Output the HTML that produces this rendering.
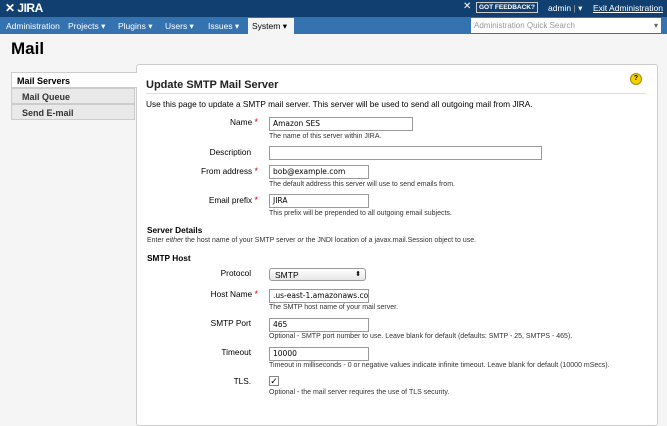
<!DOCTYPE html>
<html><head><style>
body{margin:0;width:667px;height:406px;overflow:hidden;background:#f5f5f5;font-family:"Liberation Sans",Arial,sans-serif;position:relative;color:#000}
.a{position:absolute;white-space:nowrap}
.top{position:absolute;left:0;top:0;width:667px;height:17px;background:#114070}
.nav{position:absolute;left:0;top:17px;width:667px;height:17px;background:#3572b0}
.nav span{position:absolute;top:4px;font-size:8.5px;color:#fff}
.panel{position:absolute;left:136px;top:64px;width:520px;height:360px;background:#fff;border:1px solid #ccc;border-radius:3px}
.tab{position:absolute;left:11px;width:124px;height:16px;font-size:9px;font-weight:bold;border:1px solid #ccc;box-sizing:border-box;padding:3px 0 0 10px;color:#333;background:#e9e9e9}
.lbl{position:absolute;font-size:8.3px;text-align:right;right:409px;white-space:nowrap}
.req{color:#c00;font-size:9px}
.inp{position:absolute;left:269px;height:12px;border:1px solid #999;background:#fff;font-size:7.5px;padding:0 3px;box-sizing:content-box;font-family:"DejaVu Sans",sans-serif;line-height:12px;white-space:nowrap;overflow:hidden}
.desc{position:absolute;left:269px;font-size:7px;color:#333;white-space:nowrap}
.b{font-weight:bold}
</style></head><body>
<div class="top"></div>
<div class="a" style="left:5px;top:1px;color:#fff;font-weight:bold;font-size:12px;letter-spacing:-0.5px">✕ JIRA</div>
<div class="a" style="left:463px;top:1px;color:#fff;font-size:10px">✕</div>
<div class="a" style="left:476px;top:2px;color:#fff;font-size:6.5px;border:1px solid #ccc;padding:1px 2px;font-weight:bold">GOT FEEDBACK?</div>
<div class="a" style="left:548px;top:3px;color:#fff;font-size:8.5px">admin <span style="color:#aaa">|</span> ▾</div>
<div class="a" style="left:593px;top:3px;color:#fff;font-size:8.5px;text-decoration:underline">Exit Administration</div>
<div class="nav"></div>
<div class="nav" style="background:none">
<span style="left:6px">Administration</span>
<span style="left:68px">Projects ▾</span>
<span style="left:118px">Plugins ▾</span>
<span style="left:165px">Users ▾</span>
<span style="left:208px">Issues ▾</span>
</div>
<div class="a" style="left:248px;top:18px;width:46px;height:16px;background:#f5f5f5;font-size:8.5px;padding:3px 0 0 4px;box-sizing:border-box">System ▾</div>
<div class="a" style="left:471px;top:18px;width:190px;height:15px;background:#fff;font-size:8px;color:#999;padding:3px 3px;box-sizing:border-box">Administration Quick Search<span style="position:absolute;right:3px;color:#666">▾</span></div>
<div class="a" style="left:11px;top:39px;font-size:17px;font-weight:bold">Mail</div>
<div class="panel"></div>
<div class="tab" style="top:72px;background:#fff;border-right:none;width:126px;padding-left:5px;color:#000">Mail Servers</div>
<div class="tab" style="top:88px">Mail Queue</div>
<div class="tab" style="top:104px">Send E-mail</div>
<div class="a" style="left:146px;top:79px;font-size:11px;font-weight:bold;color:#222">Update SMTP Mail Server</div>
<div class="a" style="left:630px;top:73px;width:10px;height:10px;border-radius:50%;background:#f2d200;border:1px solid #a80;font-size:7px;text-align:center;line-height:10px;font-weight:bold">?</div>
<div class="a" style="left:146px;top:93px;width:500px;height:1px;background:#ddd"></div>
<div class="a" style="left:146px;top:99px;font-size:8.3px">Use this page to update a SMTP mail server. This server will be used to send all outgoing mail from JIRA.</div>

<div class="lbl" style="top:117px">Name <span class="req">*</span></div>
<div class="inp" style="top:117px;width:136px">Amazon SES</div>
<div class="desc" style="top:133px">The name of this server within JIRA.</div>
<div class="lbl" style="top:147px">Description &nbsp;&nbsp;</div>
<div class="inp" style="top:146px;width:265px"></div>
<div class="lbl" style="top:166px">From address <span class="req">*</span></div>
<div class="inp" style="top:165px;width:92px">bob@example.com</div>
<div class="desc" style="top:181px">The default address this server will use to send emails from.</div>
<div class="lbl" style="top:195px">Email prefix <span class="req">*</span></div>
<div class="inp" style="top:194px;width:92px">JIRA</div>
<div class="desc" style="top:210px">This prefix will be prepended to all outgoing email subjects.</div>
<div class="a b" style="left:147px;top:225px;font-size:8.3px">Server Details</div>
<div class="a" style="left:147px;top:237px;font-size:7px;color:#333">Enter <i>either</i> the host name of your SMTP server <i>or</i> the JNDI location of a javax.mail.Session object to use.</div>
<div class="a b" style="left:147px;top:253px;font-size:8.3px">SMTP Host</div>
<div class="lbl" style="top:268px">Protocol &nbsp;&nbsp;</div>
<div class="a" style="left:269px;top:268px;width:97px;height:13px;border:1px solid #999;border-radius:3px;background:linear-gradient(#fff,#e6e6e6);font-size:8.5px;padding:0 5px;box-sizing:border-box;line-height:12px">SMTP<span style="position:absolute;right:4px;font-size:7px">⬍</span></div>
<div class="lbl" style="top:289px">Host Name <span class="req">*</span></div>
<div class="inp" style="top:289px;width:92px">.us-east-1.amazonaws.com</div>
<div class="desc" style="top:304px">The SMTP host name of your mail server.</div>
<div class="lbl" style="top:318px">SMTP Port &nbsp;&nbsp;</div>
<div class="inp" style="top:318px;width:92px">465</div>
<div class="desc" style="top:333px">Optional - SMTP port number to use. Leave blank for default (defaults: SMTP - 25, SMTPS - 465).</div>
<div class="lbl" style="top:347px">Timeout &nbsp;&nbsp;</div>
<div class="inp" style="top:347px;width:92px">10000</div>
<div class="desc" style="top:362px">Timeout in milliseconds - 0 or negative values indicate infinite timeout. Leave blank for default (10000 mSecs).</div>
<div class="lbl" style="top:376px">TLS. &nbsp;&nbsp;</div>
<div class="a" style="left:269px;top:376px;width:8px;height:8px;border:1px solid #888;font-size:9px;line-height:8px;text-align:center">✓</div>
<div class="desc" style="top:389px">Optional - the mail server requires the use of TLS security.</div>
</body></html>
